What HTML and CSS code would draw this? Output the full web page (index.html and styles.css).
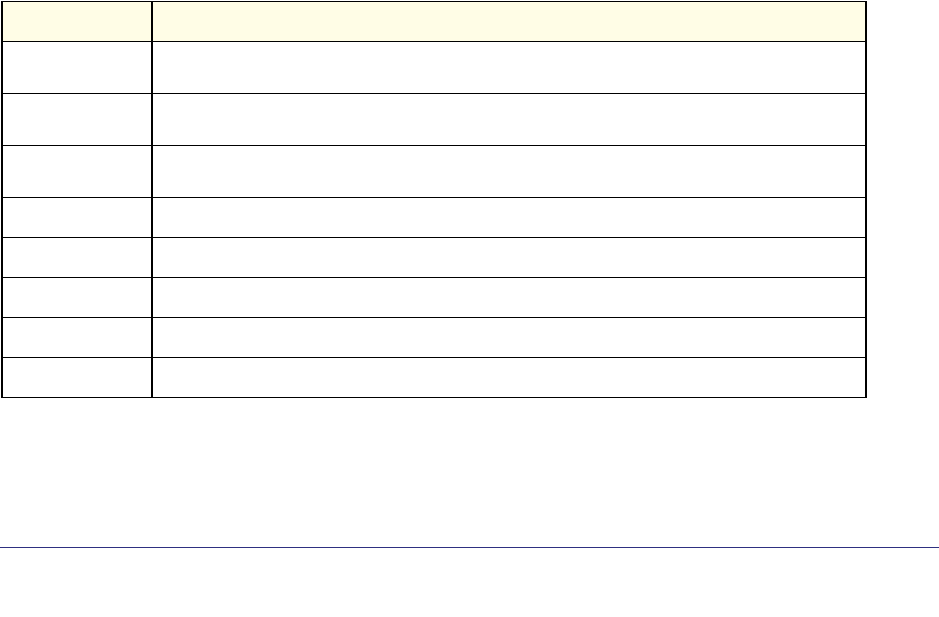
FILE: index.html
```html
<!DOCTYPE html>
<html>
<head>
<meta charset="utf-8">
<link rel="stylesheet" href="styles.css">
</head>
<body>
<div class="table">
  <div class="row head"><div class="c1"></div><div class="c2"></div></div>
  <div class="row tall"><div class="c1"></div><div class="c2"></div></div>
  <div class="row tall"><div class="c1"></div><div class="c2"></div></div>
  <div class="row tall"><div class="c1"></div><div class="c2"></div></div>
  <div class="row"><div class="c1"></div><div class="c2"></div></div>
  <div class="row"><div class="c1"></div><div class="c2"></div></div>
  <div class="row"><div class="c1"></div><div class="c2"></div></div>
  <div class="row"><div class="c1"></div><div class="c2"></div></div>
  <div class="row"><div class="c1"></div><div class="c2"></div></div>
</div>
<hr class="rule">
</body>
</html>
```
FILE: styles.css
```css
html, body {
  margin: 0;
  padding: 0;
  background: #ffffff;
  font-family: "Liberation Sans", Arial, sans-serif;
}
.table {
  box-sizing: border-box;
  width: 866px;
  margin: 1px 0 0 1px;
  border-left: 2px solid #000;
  border-right: 2px solid #000;
  border-top: 1px solid #000;
  border-bottom: 1px solid #000;
}
.row {
  display: grid;
  grid-template-columns: 150px 712px;
  height: 39px;
  border-top: 1px solid #000;
}
.row.head {
  border-top: none;
  background: #fffde6;
}
.row.tall {
  height: 51px;
}
.c1 {
  border-right: 2px solid #000;
}
.rule {
  margin: 149px 0 0 0;
  border: none;
  height: 1px;
  background: #2e3080;
}
```
